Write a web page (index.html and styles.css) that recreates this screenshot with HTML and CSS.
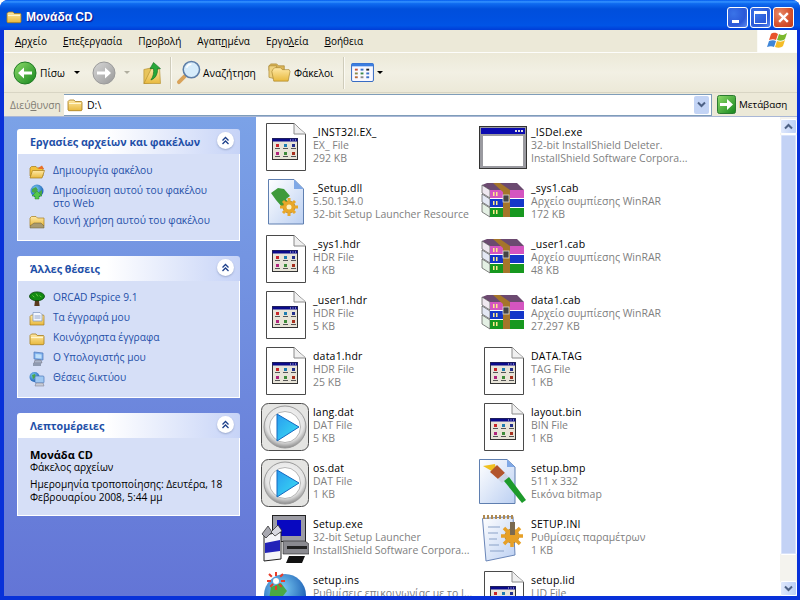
FILE: index.html
```html
<!DOCTYPE html>
<html lang="el">
<head>
<meta charset="utf-8">
<title>Μονάδα CD</title>
<link rel="stylesheet" href="styles.css">
</head>
<body>
<svg class="defs" width="0" height="0">
  <defs>
    <linearGradient id="fold" x1="0" y1="0" x2="0" y2="1"><stop offset="0" stop-color="#ffe9a6"/><stop offset="1" stop-color="#e8b93e"/></linearGradient>
    <linearGradient id="greenb" x1="0" y1="0" x2="1" y2="1"><stop offset="0" stop-color="#8fdc6a"/><stop offset="1" stop-color="#14851c"/></linearGradient>
    <linearGradient id="greyb" x1="0" y1="0" x2="1" y2="1"><stop offset="0" stop-color="#d8d8d8"/><stop offset="1" stop-color="#989898"/></linearGradient>
    <linearGradient id="paper" x1="0" y1="0" x2="1" y2="1"><stop offset="0" stop-color="#ffffff"/><stop offset="1" stop-color="#bcd0f2"/></linearGradient>
    <linearGradient id="playb" x1="0" y1="0" x2="1" y2="1"><stop offset="0" stop-color="#2a9cf0"/><stop offset="1" stop-color="#39e0f2"/></linearGradient>
    <radialGradient id="ring" cx=".5" cy=".4" r=".6"><stop offset="0" stop-color="#ffffff"/><stop offset=".75" stop-color="#e4e4e4"/><stop offset="1" stop-color="#8c8c8c"/></radialGradient>
    <radialGradient id="earth" cx=".4" cy=".35" r=".7"><stop offset="0" stop-color="#7fd0f5"/><stop offset="1" stop-color="#1556b0"/></radialGradient>

    <symbol id="folder" viewBox="0 0 16 16">
      <path d="M1 4.500 2.500 3H7l1.200 1.500H14.500l.5 1V13l-.7.7H1.700L1 13Z" fill="url(#fold)" stroke="#a67c1a" stroke-width=".8"/>
      <path d="M2 6.500h12" stroke="#fff6cf" stroke-width="1.200"/>
    </symbol>

    <symbol id="folderopen" viewBox="0 0 16 16">
      <path d="M1 4 2.500 2.500H7L8.500 4H14V12H1Z" fill="#f2c23e" stroke="#a67c1a" stroke-width=".7"/>
      <path d="M1 14 3.500 6.500H15.500L13 14Z" fill="url(#fold)" stroke="#a67c1a" stroke-width=".7"/>
      <path d="M9 4 13 1.500 15 5H10Z" fill="#e8702a"/>
    </symbol>

    <symbol id="docapp" viewBox="0 0 48 48">
      <path d="M5.500 .5H33L44.500 11V47.500H5.500Z" fill="#fff" stroke="#4a4a4a"/>
      <path d="M33 .5V11H44.500" fill="#f0f0f0" stroke="#8a8a8a"/>
      <rect x="11.500" y="15.500" width="25" height="21" fill="#e8e4d8" stroke="#333"/>
      <rect x="11.500" y="15.500" width="25" height="3" fill="#0a0a8a"/>
      <path d="M29 17h1M31.500 17h1M34 17h1" stroke="#ddd"/>
      <rect x="15" y="21" width="3" height="3" fill="#c8262a"/><rect x="23" y="21" width="3" height="3" fill="#1f7db0"/><rect x="31" y="21" width="3" height="3" fill="#23308c"/>
      <rect x="15" y="29" width="3" height="3" fill="#b0247c"/><rect x="23" y="29" width="3" height="3" fill="#3d8a3a"/><rect x="31" y="29" width="3" height="3" fill="#a6301e"/>
      <path d="M14 25.500h5M22 25.500h5M30 25.500h5M14 33.500h5M22 33.500h5M30 33.500h5" stroke="#555" stroke-width="1"/>
    </symbol>

    <symbol id="appwin" viewBox="0 0 48 48">
      <rect x=".5" y="3.500" width="47" height="42" fill="#9a9aa0" stroke="#333"/>
      <rect x="2" y="5" width="44" height="6" fill="#0a0ab0"/>
      <rect x="36" y="7" width="2" height="2" fill="#ddd"/><rect x="39" y="7" width="2" height="2" fill="#ddd"/><rect x="42" y="7" width="2" height="2" fill="#ddd"/>
      <rect x="4" y="13" width="40" height="30" fill="#fff"/>
    </symbol>

    <symbol id="dll" viewBox="0 0 48 48">
      <path d="M7.500 .5H33L42.500 10V45H7.500Z" fill="url(#paper)" stroke="#5f7fb0"/>
      <path d="M33 .5V10H42.500Z" fill="#7fa8e6"/>
      <path d="M10 14 17 9 23 10 29 17 25 20 28 25 21 28 15 21Z" fill="#3e9a3a"/>
      <circle cx="28" cy="28" r="6" fill="#e8a72a" stroke="#b37a14" stroke-width=".8"/>
      <path d="M28 19v18M19 28h18M22 22l12 12M34 22 22 34" stroke="#e8a72a" stroke-width="3"/>
      <circle cx="28" cy="28" r="2.500" fill="#fff1c0"/>
    </symbol>

    <symbol id="rar" viewBox="0 0 48 48">
      <path d="M3 6 8 4H38L45 11H11Z" fill="#6c4a70"/>
      <path d="M3 6 11 11V19L3 14Z" fill="#efe8f0" stroke="#333" stroke-width=".6"/>
      <rect x="11" y="11" width="34" height="8" fill="#d455c0"/>
      <path d="M3 15 11 20V28L3 23Z" fill="#e4e8f4" stroke="#333" stroke-width=".6"/>
      <rect x="11" y="20" width="34" height="8" fill="#1436c8"/>
      <path d="M3 24 11 29V38L3 33Z" fill="#e4f0e4" stroke="#333" stroke-width=".6"/>
      <rect x="11" y="29" width="34" height="9" fill="#17981f"/>
      <path d="M14 4H21L31 11V38H24V13Z" fill="#a5752a"/>
      <rect x="24" y="16" width="6" height="7" fill="#444" stroke="#ddd" stroke-width=".8"/>
      <path d="M14 13h1.500v4H14ZM17 13h1.500v4H17ZM14 22h1.500v4H14ZM17 22h1.500v4H17ZM14 31h1.500v4H14ZM17 31h1.500v4H17Z" fill="#ffe98a"/>
    </symbol>

    <symbol id="play" viewBox="0 0 48 48">
      <rect x=".5" y=".5" width="47" height="47" rx="7" fill="#e4e4e2" stroke="#4c4c4c"/>
      <circle cx="24" cy="24" r="21" fill="url(#ring)" stroke="#9a9a9a"/>
      <circle cx="24" cy="24" r="15.500" fill="#fff" stroke="#b5b5b5"/>
      <path d="M16 11 38 24 16 38Z" fill="url(#playb)" stroke="#1468c0"/>
    </symbol>

    <symbol id="setupexe" viewBox="0 0 48 48">
      <rect x="11.500" y=".5" width="33" height="26" fill="#9c9ca4" stroke="#222"/>
      <rect x="16" y="5" width="24" height="16" fill="#0808c0"/>
      <path d="M22 26H44L48 29V39H22Z" fill="#8a8a90" stroke="#222" stroke-width=".6"/>
      <rect x="26" y="31" width="20" height="3" fill="#222"/>
      <path d="M28 41H44L41 48H25Z" fill="#111"/>
      <path d="M3 20 20 17V44L3 46Z" fill="#f4f4f8" stroke="#222"/>
      <path d="M4 28 19 25V36L4 38Z" fill="#2222b8"/>
      <path d="M1 19 7 11 11 17 5 23Z" fill="#a8a8b0" stroke="#222" stroke-width=".7"/>
      <path d="M10 17 17 10 21 16 14 21Z" fill="#d8d8e0" stroke="#222" stroke-width=".7"/>
    </symbol>

    <symbol id="bmp" viewBox="0 0 48 48">
      <path d="M.5 .5H28L36 8V44.500H.5Z" fill="url(#paper)" stroke="#5f7fb0"/>
      <path d="M28 .5V8H36Z" fill="#7fa8e6"/>
      <path d="M4 7 16 5 18 15Z" fill="#f0c020"/>
      <path d="M11 13 18 6 26 14 19 20Z" fill="#b2552c"/>
      <path d="M19 20 26 14 30 18 23 24Z" fill="#ccd4e4"/>
      <path d="M25 22 30 18 47 41 43 44Z" fill="#1d9a2b"/>
    </symbol>

    <symbol id="ini" viewBox="0 0 48 48">
      <path d="M3.500 3.500 34 1.500 36 40 7 46Z" fill="url(#paper)" stroke="#6a86b8"/>
      <path d="M4 2h30" stroke="#b08a50" stroke-width="4" stroke-dasharray="2 2"/>
      <path d="M9 12h12M9 18h10M10 24h8M10 30h10M11 36h14" stroke="#8aa2c8" stroke-width="1.200"/>
      <circle cx="33" cy="21" r="7" fill="#e6a027" stroke="#ad7414" stroke-width=".8"/>
      <path d="M33 10v22M22 21h22M25 13l16 16M41 13 25 29" stroke="#e6a027" stroke-width="3.500"/>
      <path d="M31 7h5v13h-5Z" fill="#7a6a50"/>
    </symbol>

    <symbol id="ins" viewBox="0 0 48 48">
      <circle cx="24" cy="24" r="21" fill="url(#earth)"/>
      <path d="M10 16 20 12 26 20 18 30 8 28Z" fill="#4aa845"/>
      <path d="M28 34 40 28 38 44 30 46Z" fill="#4aa845"/>
      <path d="M6 10h18M15 1v18M8 3l14 14M22 3 8 17" stroke="#e83c28" stroke-width="2" stroke-dasharray="4 3"/>
      <circle cx="15" cy="10" r="3" fill="#fff"/>
    </symbol>

    <symbol id="globeup" viewBox="0 0 16 16">
      <circle cx="8" cy="7" r="6.500" fill="url(#earth)"/>
      <path d="M3 5 7 3 9 6 6 9 3 8ZM10 8 13 6 13 10 11 12Z" fill="#4aa845"/>
      <path d="M8 7 13 12H10V15H6V12H3Z" fill="#55c84a" stroke="#2a8a28" stroke-width=".5"/>
    </symbol>
    <symbol id="share" viewBox="0 0 16 16">
      <path d="M1 4 2.500 2.500H7L8.500 4H15V12H1Z" fill="url(#fold)" stroke="#a67c1a" stroke-width=".7"/>
      <path d="M1 12 5 9H12L15 12V14H1Z" fill="#a89a70" stroke="#6a5a30" stroke-width=".5"/>
    </symbol>
    <symbol id="tree" viewBox="0 0 18 18">
      <path d="M7 9h4l1 8H6Z" fill="#5a3a1e"/>
      <ellipse cx="9" cy="6" rx="8.500" ry="5" fill="#128a12" stroke="#063a06" stroke-width=".8"/>
      <path d="M4 5l2 2M8 3l2 3M12 5l2 2" stroke="#7ad44a"/>
    </symbol>
    <symbol id="mydocs" viewBox="0 0 16 16">
      <path d="M1 5.500 2.500 4H14.500l.5 1V14H1Z" fill="url(#fold)" stroke="#a67c1a" stroke-width=".7"/>
      <path d="M4 1.500H11L13 3.500V10H4Z" fill="#f2f6ff" stroke="#7b93bd" stroke-width=".7"/>
      <path d="M5.500 5h6M5.500 7h6" stroke="#7b93bd" stroke-width=".8"/>
    </symbol>
    <symbol id="mypc" viewBox="0 0 16 16">
      <path d="M5 1 14 2V9L5 8Z" fill="#7fb0ee" stroke="#4a76b8" stroke-width=".7"/>
      <path d="M6.500 3 12.500 3.500V7.500L6.500 7Z" fill="#bfe0fa"/>
      <path d="M6 9H12L13 12H5Z" fill="#aab4c8" stroke="#667" stroke-width=".5"/>
      <path d="M4 12h8v3H4Z" fill="#8f9ab0"/>
    </symbol>
    <symbol id="net" viewBox="0 0 16 16">
      <circle cx="5.500" cy="6" r="5" fill="url(#earth)"/>
      <path d="M3 4 6 3 7 6 4 8Z" fill="#4aa845"/>
      <rect x="6" y="5" width="9" height="7" rx="1" fill="#9fc8f2" stroke="#4a76b8" stroke-width=".7"/>
      <path d="M7 12h7l1 3H6Z" fill="#c8ccd6" stroke="#778" stroke-width=".5"/>
    </symbol>
    <symbol id="chev" viewBox="0 0 9 9">
      <path d="M1.500 4.500 4.500 1.500 7.500 4.500M1.500 8 4.500 5 7.500 8" fill="none" stroke="#1c3f8a" stroke-width="1.300"/>
    </symbol>
  </defs>
</svg>

<main class="window">
  <header class="titlebar">
    <svg class="title-icon"><use href="#folder"/></svg>
    <span class="title-text">Μονάδα CD</span>
    <div class="caption">
      <span class="cap cap-min"><i class="min-glyph"></i></span>
      <span class="cap cap-max"><i class="max-glyph"></i></span>
      <span class="cap cap-close">
        <svg class="close-glyph" viewBox="0 0 12 12"><path d="M2 2 10 10M10 2 2 10" stroke="#fff" stroke-width="2.200"/></svg>
      </span>
    </div>
  </header>

  <div class="client">
    <nav class="menubar">
      <div class="menus">
        <span><u>Α</u>ρχείο</span>
        <span><u>Ε</u>πεξεργασία</span>
        <span>Π<u>ρ</u>οβολή</span>
        <span>Αγαπ<u>η</u>μένα</span>
        <span>Εργα<u>λ</u>εία</span>
        <span><u>Β</u>οήθεια</span>
      </div>
      <div class="flagbox">
        <svg class="flag" viewBox="0 0 22 20">
          <path d="M4 3C7 1 9 2 11 3L9 9C7 8 5 8 2 9Z" fill="#e8532c"/>
          <path d="M12 3C15 5 17 4 20 2L18 8C16 10 13 10 10 9Z" fill="#7cb82f"/>
          <path d="M2 10C5 9 7 9 9 10L7 16C5 15 3 15 0 16Z" fill="#3f86d8"/>
          <path d="M10 10C13 11 15 11 18 9L16 15C14 17 11 17 8 16Z" fill="#f5bc28"/>
        </svg>
      </div>
    </nav>

    <div class="toolbar">
      <div class="tool tool-back">
        <svg class="nav-btn" viewBox="0 0 24 24"><circle cx="12" cy="12" r="11" fill="url(#greenb)" stroke="#1f7a24"/><path d="M19 10.500H11V6.500L5 12l6 5.500v-4h8Z" fill="#fff"/></svg>
        <span>Πίσω</span>
        <i class="drop"></i>
      </div>
      <div class="tool tool-fwd">
        <svg class="nav-btn" viewBox="0 0 24 24"><circle cx="12" cy="12" r="11" fill="url(#greyb)" stroke="#9a9a9a"/><path d="M5 10.500H13V6.500L19 12l-6 5.500v-4H5Z" fill="#fff"/></svg>
        <i class="drop drop-off"></i>
      </div>
      <svg class="up-icon" viewBox="0 0 24 26">
        <path d="M1 9 10 7V24L1 25Z" fill="#e8c45c" stroke="#b08a28" stroke-width=".7"/>
        <path d="M10 7 19 9 20 25H1Z" fill="url(#fold)" stroke="#b08a28" stroke-width=".7"/>
        <path d="M12 1 20 8H16.500C17 13 15 19 9 21 12 17 12.500 12 12 8H8Z" fill="#28a83a" stroke="#0f6a1c" stroke-width=".7"/>
      </svg>
      <i class="sep sep-a"></i>
      <div class="tool tool-search">
        <svg class="search-icon" viewBox="0 0 26 26">
          <path d="M10 16 3 23" stroke="#d9a35a" stroke-width="4" stroke-linecap="round"/>
          <circle cx="16" cy="10" r="8.500" fill="#d6ecfb" stroke="#5e7fa8" stroke-width="1.600"/>
          <path d="M11 8a5.500 5.500 0 0 1 5-3.500" stroke="#fff" stroke-width="1.600" fill="none"/>
        </svg>
        <span>Αναζήτηση</span>
      </div>
      <div class="tool tool-folders">
        <svg class="folders-icon" viewBox="0 0 24 24">
          <path d="M1 5 3 3H9L11 5H17V10H1Z" fill="#d9b458" stroke="#a8862e" stroke-width=".7"/>
          <path d="M1 5H9V19L1 17Z" fill="#efd27e" stroke="#a8862e" stroke-width=".7"/>
          <path d="M5 9 7 7H13L15 9H22L23 11 21 21H6L4 11Z" fill="url(#fold)" stroke="#a8862e" stroke-width=".7"/>
        </svg>
        <span>Φάκελοι</span>
      </div>
      <i class="sep sep-b"></i>
      <div class="tool tool-views">
        <svg class="views-icon" viewBox="0 0 24 20">
          <rect x=".5" y=".5" width="23" height="19" rx="1.500" fill="#f8f8ff" stroke="#2a62c0"/>
          <rect x=".5" y=".5" width="23" height="3" fill="#3c7ee0"/>
          <path d="M4 6h3v2H4Z" fill="#c8563a"/><path d="M10 6h3v2h-3Z" fill="#3a6fc8"/><path d="M16 6h3v2h-3Z" fill="#222"/>
          <path d="M4 10h3v2H4Z" fill="#8a8a4a"/><path d="M10 10h3v2h-3Z" fill="#3a8a4a"/><path d="M16 10h3v2h-3Z" fill="#3a6fc8"/>
          <path d="M4 14h3v2H4Z" fill="#b86a3a"/><path d="M10 14h3v2h-3Z" fill="#8a8a8a"/><path d="M16 14h3v2h-3Z" fill="#3a6fc8"/>
        </svg>
        <i class="drop"></i>
      </div>
    </div>

    <div class="addressbar">
      <span class="addr-label">Διεύ<u>θ</u>υνση</span>
      <div class="addr-field">
        <svg class="addr-icon"><use href="#folder"/></svg>
        <span class="addr-value">D:\</span>
        <span class="addr-drop">
          <svg class="chev-down" viewBox="0 0 9 7"><path d="M1 1.500 4.500 5 8 1.500" fill="none" stroke="#4d6185" stroke-width="2"/></svg>
        </span>
      </div>
      <div class="go">
        <svg class="go-icon" viewBox="0 0 19 19"><rect x=".5" y=".5" width="18" height="18" rx="2" fill="url(#greenb)" stroke="#2b7a30"/><path d="M3 8H10V4L16 9.500 10 15V11H3Z" fill="#fff"/></svg>
        <span>Μετάβαση</span>
      </div>
    </div>

    <div class="main">
      <aside class="sidebar">
        <section class="panel">
          <header class="panel-head">
            <h2>Εργασίες αρχείων και φακέλων</h2>
            <span class="toggle"><svg class="toggle-icon"><use href="#chev"/></svg></span>
          </header>
          <div class="panel-body tasks">
            <a class="task"><svg class="task-icon"><use href="#folderopen"/></svg><span>Δημιουργία φακέλου</span></a>
            <a class="task"><svg class="task-icon"><use href="#globeup"/></svg><span>Δημοσίευση αυτού του φακέλου στο Web</span></a>
            <a class="task"><svg class="task-icon"><use href="#share"/></svg><span>Κοινή χρήση αυτού του φακέλου</span></a>
          </div>
        </section>

        <section class="panel">
          <header class="panel-head">
            <h2>Άλλες θέσεις</h2>
            <span class="toggle"><svg class="toggle-icon"><use href="#chev"/></svg></span>
          </header>
          <div class="panel-body places">
            <a class="task"><svg class="task-icon"><use href="#tree"/></svg><span>ORCAD Pspice 9.1</span></a>
            <a class="task"><svg class="task-icon"><use href="#mydocs"/></svg><span>Τα έγγραφά μου</span></a>
            <a class="task"><svg class="task-icon"><use href="#folder"/></svg><span>Κοινόχρηστα έγγραφα</span></a>
            <a class="task"><svg class="task-icon"><use href="#mypc"/></svg><span>Ο Υπολογιστής μου</span></a>
            <a class="task"><svg class="task-icon"><use href="#net"/></svg><span>Θέσεις δικτύου</span></a>
          </div>
        </section>

        <section class="panel">
          <header class="panel-head">
            <h2>Λεπτομέρειες</h2>
            <span class="toggle"><svg class="toggle-icon"><use href="#chev"/></svg></span>
          </header>
          <div class="panel-body details">
            <strong>Μονάδα CD</strong>
            <span>Φάκελος αρχείων</span>
            <p>Ημερομηνία τροποποίησης: Δευτέρα, 18 Φεβρουαρίου 2008, 5:44 μμ</p>
          </div>
        </section>
      </aside>

      <section class="files">
        <div class="file"><svg class="file-icon"><use href="#docapp"/></svg><div class="meta"><b>_INST32I.EX_</b><span>EX_ File</span><span>292 KB</span></div></div>
        <div class="file"><svg class="file-icon"><use href="#appwin"/></svg><div class="meta"><b>_ISDel.exe</b><span>32-bit InstallShield Deleter.</span><span>InstallShield Software Corpora...</span></div></div>
        <div class="file"><svg class="file-icon"><use href="#dll"/></svg><div class="meta"><b>_Setup.dll</b><span>5.50.134.0</span><span>32-bit Setup Launcher Resource</span></div></div>
        <div class="file"><svg class="file-icon"><use href="#rar"/></svg><div class="meta"><b>_sys1.cab</b><span>Αρχείο συμπίεσης WinRAR</span><span>172 KB</span></div></div>
        <div class="file"><svg class="file-icon"><use href="#docapp"/></svg><div class="meta"><b>_sys1.hdr</b><span>HDR File</span><span>4 KB</span></div></div>
        <div class="file"><svg class="file-icon"><use href="#rar"/></svg><div class="meta"><b>_user1.cab</b><span>Αρχείο συμπίεσης WinRAR</span><span>48 KB</span></div></div>
        <div class="file"><svg class="file-icon"><use href="#docapp"/></svg><div class="meta"><b>_user1.hdr</b><span>HDR File</span><span>5 KB</span></div></div>
        <div class="file"><svg class="file-icon"><use href="#rar"/></svg><div class="meta"><b>data1.cab</b><span>Αρχείο συμπίεσης WinRAR</span><span>27.297 KB</span></div></div>
        <div class="file"><svg class="file-icon"><use href="#docapp"/></svg><div class="meta"><b>data1.hdr</b><span>HDR File</span><span>25 KB</span></div></div>
        <div class="file"><svg class="file-icon"><use href="#docapp"/></svg><div class="meta"><b>DATA.TAG</b><span>TAG File</span><span>1 KB</span></div></div>
        <div class="file"><svg class="file-icon"><use href="#play"/></svg><div class="meta"><b>lang.dat</b><span>DAT File</span><span>5 KB</span></div></div>
        <div class="file"><svg class="file-icon"><use href="#docapp"/></svg><div class="meta"><b>layout.bin</b><span>BIN File</span><span>1 KB</span></div></div>
        <div class="file"><svg class="file-icon"><use href="#play"/></svg><div class="meta"><b>os.dat</b><span>DAT File</span><span>1 KB</span></div></div>
        <div class="file"><svg class="file-icon"><use href="#bmp"/></svg><div class="meta"><b>setup.bmp</b><span>511 x 332</span><span>Εικόνα bitmap</span></div></div>
        <div class="file"><svg class="file-icon"><use href="#setupexe"/></svg><div class="meta"><b>Setup.exe</b><span>32-bit Setup Launcher</span><span>InstallShield Software Corpora...</span></div></div>
        <div class="file"><svg class="file-icon"><use href="#ini"/></svg><div class="meta"><b>SETUP.INI</b><span>Ρυθμίσεις παραμέτρων</span><span>1 KB</span></div></div>
        <div class="file"><svg class="file-icon"><use href="#ins"/></svg><div class="meta"><b>setup.ins</b><span>Ρυθμίσεις επικοινωνίας με το I...</span><span>1 KB</span></div></div>
        <div class="file"><svg class="file-icon"><use href="#docapp"/></svg><div class="meta"><b>setup.lid</b><span>LID File</span><span>1 KB</span></div></div>
      </section>

      <div class="scrollbar">
        <span class="sb-btn"><svg class="sb-chev" viewBox="0 0 9 7"><path d="M1 5.500 4.500 2 8 5.500" fill="none" stroke="#4d6185" stroke-width="2"/></svg></span>
        <span class="sb-thumb"></span>
        <span class="sb-track"></span>
        <span class="sb-btn"><svg class="sb-chev" viewBox="0 0 9 7"><path d="M1 1.500 4.500 5 8 1.500" fill="none" stroke="#4d6185" stroke-width="2"/></svg></span>
      </div>
    </div>
  </div>
</main>
</body>
</html>
```

FILE: styles.css
```css
* { box-sizing: border-box; }
html, body { margin: 0; padding: 0; background: #fff; }
body { width: 810px; height: 610px; overflow: hidden; font-family: "Open Sans", "Noto Sans", sans-serif; font-size: 10.200px; color: #000; }
.defs { display: block; height: 0; }
u { text-decoration: underline; }

.window { width: 800px; height: 600px; display: flex; flex-direction: column; overflow: hidden; background: #0831d9; border-radius: 8px 8px 0 0; }

.titlebar { height: 30px; flex: none; display: flex; align-items: center; padding: 4px 6px 0 6px;
  background: linear-gradient(#0058ee 0%, #3593ff 6%, #0f6bf0 12%, #004fdc 30%, #0050e0 60%, #0054e6 85%, #003dd7 100%); }
.title-icon { width: 16px; height: 16px; flex: none; }
.title-text { margin-left: 4px; font: bold 12px "Liberation Sans", sans-serif; color: #fff; text-shadow: 1px 1px 1px #0f1089; flex: 1; }
.caption { display: flex; gap: 2px; }
.cap { width: 21px; height: 21px; border: 1px solid #fff; border-radius: 3px; display: flex; align-items: center; justify-content: center; position: relative; }
.cap-min, .cap-max { background: radial-gradient(circle at 30% 30%, #3a74e8, #2a58d8 60%, #5f8cf0); }
.cap-close { background: radial-gradient(circle at 30% 30%, #e88a68, #d4502c 60%, #c23a18); }
.min-glyph { width: 7px; height: 3px; background: #fff; position: absolute; left: 4px; bottom: 4px; }
.max-glyph { width: 13px; height: 13px; border: 1px solid #fff; border-top-width: 3px; }
.close-glyph { width: 13px; height: 13px; }

.client { flex: 1; min-height: 0; margin: 0 3px 4px 4px; display: flex; flex-direction: column; background: #ece9d8; }

.menubar { height: 23px; flex: none; display: flex; justify-content: space-between; border-bottom: 1px solid #fdfdfb; background: #ece9d8; }
.menus { display: flex; gap: 16px; padding: 3px 0 0 11px; font-size: 10px; line-height: 16px; color: #000; }
.flagbox { width: 40px; background: #fff; display: flex; align-items: center; justify-content: center; border-left: 1px solid #fbfbf6; }
.flag { width: 22px; height: 20px; }

.toolbar { height: 40px; flex: none; display: flex; align-items: center; padding-left: 9px; background: linear-gradient(#ece9d8, #f2f0e4 50%, #ece9d8); border-bottom: 1px solid #d8d5c4; }
.tool { display: flex; align-items: center; }
.nav-btn { width: 24px; height: 24px; flex: none; }
.tool-back span { margin-left: 3px; }
.drop { display: block; width: 0; height: 0; border: 3px solid transparent; border-top: 3px solid #000; border-bottom: 0; margin-left: 9px; }
.drop-off { border-top-color: #b0ae9f; margin-left: 8px; }
.tool-fwd { margin-left: 12px; }
.up-icon { width: 21px; height: 24px; flex: none; margin-left: 13px; }
.sep { display: block; width: 1px; height: 32px; background: #cfccbb; box-shadow: 1px 0 0 #fbfaf3; }
.sep-a { margin-left: 6px; }
.tool-search { margin-left: 5px; }
.search-icon { width: 25px; height: 25px; flex: none; }
.tool-search span { margin-left: 2px; }
.tool-folders { margin-left: 12px; }
.folders-icon { width: 23px; height: 23px; flex: none; }
.tool-folders span { margin-left: 3px; }
.sep-b { margin-left: 10px; }
.tool-views { margin-left: 7px; }
.views-icon { width: 23px; height: 19px; flex: none; }
.tool-views .drop { margin-left: 3px; }

.addressbar { height: 23px; flex: none; display: flex; align-items: center; background: #ece9d8; }
.addr-label { width: 60px; flex: none; padding-left: 6px; color: #7f7c73; }
.addr-field { flex: 1; height: 22px; display: flex; align-items: center; background: #fff; border: 1px solid #7f9db9; border-left: 0; padding-left: 3px; }
.addr-icon { width: 16px; height: 16px; flex: none; }
.addr-value { margin-left: 4px; font-size: 10.500px; }
.addr-drop { margin-left: auto; width: 15px; height: 18px; margin-right: 2px; background: #c3d4f5; border-radius: 2px; display: flex; align-items: center; justify-content: center; }
.chev-down { width: 9px; height: 7px; }
.go { width: 85px; flex: none; display: flex; align-items: center; padding-left: 5px; }
.go-icon { width: 19px; height: 19px; flex: none; }
.go span { margin-left: 3px; font-size: 9.800px; }

.main { flex: 1; min-height: 0; display: flex; background: #fff; border-top: 1px solid #a9b7d6; }
.sidebar { width: 252px; flex: none; padding: 12px 16px 0 13px; background: linear-gradient(#7ba2e7, #6375d6); display: flex; flex-direction: column; gap: 15px; overflow: hidden; }

.panel-head { height: 25px; display: flex; align-items: center; justify-content: space-between; padding: 0 6px 0 13px; background: linear-gradient(90deg, #fff, #fff 40%, #c6d3f7); border-radius: 3px 3px 0 0; }
.panel-head h2 { margin: 0; font-size: 10.700px; font-weight: 700; color: #1e4fa8; white-space: nowrap; }
.toggle { width: 17px; height: 17px; margin-bottom: 3px; border-radius: 50%; background: #fff; box-shadow: 0 1px 2px #9aa8cc; display: flex; align-items: center; justify-content: center; }
.toggle-icon { width: 9px; height: 9px; }
.panel-body { background: #d6dff7; border: 1px solid #fff; border-top: 0; }

.tasks { padding: 10px 26px 0 11px; height: 87px; }
.places { padding: 10px 8px 0 11px; height: 117px; }
.task { display: flex; align-items: flex-start; color: #1f4fa8; font-size: 10.200px; line-height: 13px; margin-bottom: 4px; }
.task-icon { width: 16px; height: 16px; flex: none; margin-right: 8px; }
.task span { display: block; }
.details { height: 78px; padding: 10px 12px 0 12px; display: flex; flex-direction: column; font-size: 10.200px; line-height: 13px; color: #000; }
.details strong { font-size: 11px; font-weight: 700; }
.details p { margin: 4px 0 0; }

.files { width: 524px; flex: none; height: 100%; overflow: hidden; padding: 4px 0 0 5px; display: grid; grid-template-columns: 218px 300px; grid-auto-rows: 56px; align-content: start; }
.file { display: flex; align-items: flex-start; overflow: hidden; }
.file-icon { width: 48px; height: 48px; flex: none; margin-top: 2px; }
.meta { margin: 5px 0 0 4px; display: flex; flex-direction: column; line-height: 13px; font-size: 10.500px; color: #7f7f7f; white-space: nowrap; }
.meta b { font-weight: 400; letter-spacing: .2px; color: #000; }

.scrollbar { width: 17px; flex: none; height: 100%; display: flex; flex-direction: column; background: #f4f3ee; padding: 2px 0 0; }
.sb-btn { height: 15px; flex: none; background: linear-gradient(90deg, #dfe8fc, #bccff6); border: 1px solid #fff; border-radius: 2px; display: flex; align-items: center; justify-content: center; }
.sb-chev { width: 9px; height: 7px; }
.sb-thumb { height: 421px; flex: none; background: #c3d2f5; border: 1px solid #fff; border-radius: 2px; box-shadow: inset 0 0 0 1px #d8e2fa; }
.sb-track { flex: 1; }
```
